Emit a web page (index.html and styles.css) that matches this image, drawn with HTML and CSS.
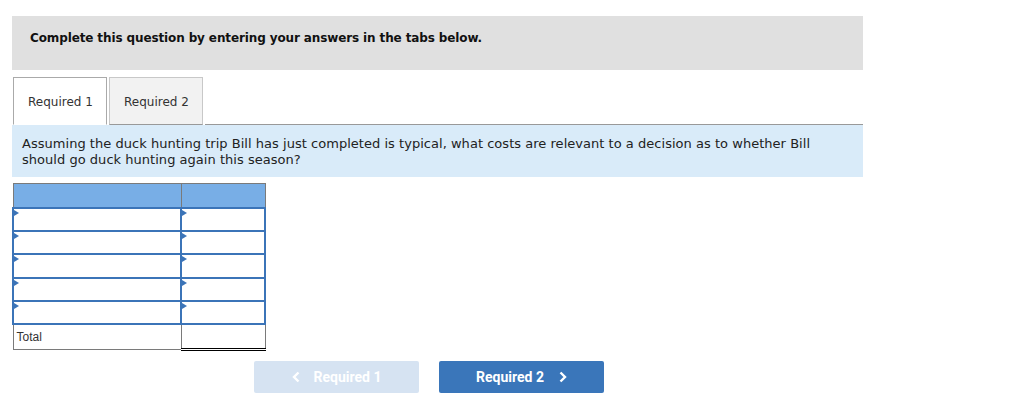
FILE: index.html
```html
<!DOCTYPE html>
<html>
<head>
<meta charset="utf-8">
<link rel="stylesheet" href="styles.css">
</head>
<body>
<div class="wrap">
  <div class="banner">Complete this question by entering your answers in the tabs below.</div>
  <div class="tabs">
    <div class="tab active">Required 1</div>
    <div class="tab">Required 2</div>
    <div class="tab-rest"></div>
  </div>
  <div class="question">Assuming the duck hunting trip Bill has just completed is typical, what costs are relevant to a decision as to whether Bill should go duck hunting again this season?</div>
  <table class="grid">
    <tr class="head"><th class="c1"></th><th class="c2"></th></tr>
    <tr><td class="in c1"><span class="tri"></span></td><td class="in c2"><span class="tri"></span></td></tr>
    <tr><td class="in c1"><span class="tri"></span></td><td class="in c2"><span class="tri"></span></td></tr>
    <tr><td class="in c1"><span class="tri"></span></td><td class="in c2"><span class="tri"></span></td></tr>
    <tr><td class="in c1"><span class="tri"></span></td><td class="in c2"><span class="tri"></span></td></tr>
    <tr><td class="in c1"><span class="tri"></span></td><td class="in c2"><span class="tri"></span></td></tr>
    <tr class="total"><td class="c1 label">Total</td><td class="c2 sum"></td></tr>
  </table>
  <div class="nav">
    <button class="btn prev"><svg class="chev" width="8" height="12" viewBox="0 0 8 12"><polyline points="6.5,1.5 2,6 6.5,10.5" fill="none" stroke="#fff" stroke-width="2.4"/></svg>Required 1</button>
    <button class="btn next">Required 2<svg class="chev" width="8" height="12" viewBox="0 0 8 12"><polyline points="1.5,1.5 6,6 1.5,10.5" fill="none" stroke="#fff" stroke-width="2.4"/></svg></button>
  </div>
</div>
</body>
</html>
```
FILE: styles.css
```css
html, body { margin: 0; padding: 0; background: #fff; }
body { font-family: "DejaVu Sans", Verdana, sans-serif; color: #222; }
.wrap { padding: 16px 0 0 12px; width: 851px; }
.banner {
  background: #e0e0e0;
  height: 54px;
  box-sizing: border-box;
  padding: 15px 0 0 18px;
  font-size: 12px;
  font-weight: bold;
  letter-spacing: -0.12px;
  color: #111;
}
.tabs { display: flex; margin-top: 7px; height: 48px; align-items: stretch; }
.tab {
  box-sizing: border-box;
  width: 94px;
  border: 1px solid #c8c8c8;
  border-bottom: 1px solid #999;
  background: #f2f2f2;
  font-size: 12px;
  color: #333;
  padding: 17px 0 0 14px;
  margin-right: 2px;
}
.tab.active {
  background: #fff;
  border-color: #aaa;
  border-bottom-color: #fff;
  margin-left: 1px;
}
.tab-rest { flex: 1; border-bottom: 1px solid #999; }
.question {
  background: #d9ebf9;
  height: 52px;
  box-sizing: border-box;
  padding: 11px 10px 0 10px;
  font-size: 13px;
  letter-spacing: 0.03px;
  line-height: 16px;
  color: #222;
}
.grid {
  margin-top: 6px;
  border-collapse: collapse;
  width: 254px;
}
.grid td, .grid th { border: 1px solid #7a7a7a; padding: 0; position: relative; }
.grid .c1 { width: 168px; }
.grid .c2 { width: 84px; }
.grid .head th { background: #78aee6; height: 23px; }
.grid td.in { border: 2px solid #3b74b8; height: 21.2px; background: #fff; }
.tri {
  position: absolute; left: 0; top: 1px;
  width: 0; height: 0;
  border-top: 3px solid transparent;
  border-bottom: 3px solid transparent;
  border-left: 5px solid #3b74b8;
}
.grid .total td { height: 23px; }
.label { font-family: "Liberation Sans", Arial, sans-serif; font-size: 12px; color: #333; padding-left: 3px !important; }
.grid td.sum { border-top: 1px solid #000; border-bottom: 3px double #000; }
.nav { display: flex; gap: 20px; margin-top: 10px; margin-left: 242px; }
.btn {
  width: 165px; height: 32px;
  border: none; border-radius: 2px;
  font-family: Roboto, "Liberation Sans", Arial, sans-serif;
  font-weight: bold; font-size: 14px;
  color: #fff;
  display: flex; align-items: center; justify-content: center;
}
.btn.prev { background: #d6e3f2; }
.btn.next { background: #3a76ba; }
.chev { display: block; }
.prev .chev { margin-right: 14px; }
.next .chev { margin-left: 15px; }
```
